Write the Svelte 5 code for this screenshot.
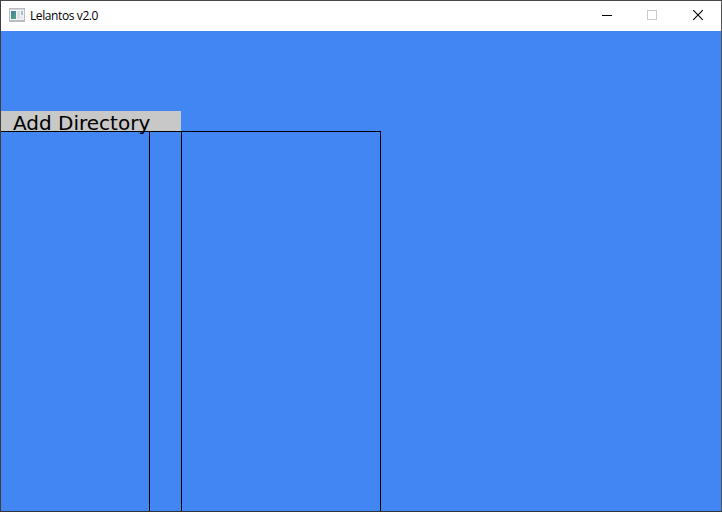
<script>
  const columns = [149, 32, 199];
</script>

<div class="window">
  <header>
    <svg class="app" width="16" height="14" viewBox="0 0 16 14" shape-rendering="crispEdges">
      <defs>
        <linearGradient id="screen" x1="0" y1="0" x2="1" y2="1">
          <stop offset="0" stop-color="#4378ad" />
          <stop offset="1" stop-color="#55a878" />
        </linearGradient>
      </defs>
      <rect width="16" height="14" fill="#b9bdc2" />
      <rect x="1" y="1" width="14" height="1" fill="#d3d6da" />
      <rect x="1" y="2" width="14" height="10" fill="#f2f3f5" />
      <rect x="2" y="3" width="5" height="8" fill="url(#screen)" />
      <rect x="8" y="3" width="3" height="8" fill="#dddfe5" />
      <rect x="12" y="3" width="2" height="4" fill="#9bc4cf" />
      <rect x="12" y="8" width="2" height="3" fill="#e6e8eb" />
    </svg>
    <span class="title">Lelantos v2.0</span>
    <div class="controls">
      <svg width="46" height="30" viewBox="0 0 46 30" shape-rendering="crispEdges">
        <rect x="19" y="14" width="10" height="1" fill="#000" />
      </svg>
      <svg width="46" height="30" viewBox="0 0 46 30" shape-rendering="crispEdges">
        <rect x="18.5" y="9.5" width="9" height="9" fill="none" stroke="#ccc" />
      </svg>
      <svg width="46" height="30" viewBox="0 0 46 30">
        <path d="M18.2 9.2 27.8 18.8M27.8 9.2 18.2 18.8" fill="none" stroke="#000" stroke-width="1.1" />
      </svg>
    </div>
  </header>
  <main>
    <button>Add Directory</button>
    <div class="columns">
      {#each columns as width}
        <div class="column" style="width: {width}px"></div>
      {/each}
    </div>
  </main>
</div>

<style>
  :global(body) { margin: 0; }
  .window {
    box-sizing: border-box;
    width: 722px;
    height: 512px;
    display: flex;
    flex-direction: column;
    border: 1px solid #444;
    border-color: #484747 #555 #303338 #423d3c;
    background: #4286f4;
    overflow: hidden;
  }
  header {
    height: 30px;
    flex: none;
    display: flex;
    align-items: center;
    background: #fff;
  }
  .app { margin: 0 5px 2px 8px; }
  .title {
    font: 12px/16px "Open Sans", "Noto Sans", sans-serif;
    letter-spacing: -0.4px;
    color: #000;
  }
  .controls { display: flex; margin-left: auto; }
  main {
    flex: 1;
    display: flex;
    flex-direction: column;
    padding-top: 80px;
  }
  button {
    box-sizing: border-box;
    width: 180px;
    height: 20px;
    flex: none;
    border: 0;
    padding: 0 0 0 12px;
    background: #c8c8c8;
    color: #000;
    text-align: left;
    font: 20px/24px "DejaVu Sans", sans-serif;
    white-space: nowrap;
    position: relative;
    z-index: 1;
  }
  .columns { flex: 1; display: flex; }
  .column {
    box-sizing: border-box;
    border-top: 1px solid #000;
    border-right: 1px solid #000;
  }
</style>
